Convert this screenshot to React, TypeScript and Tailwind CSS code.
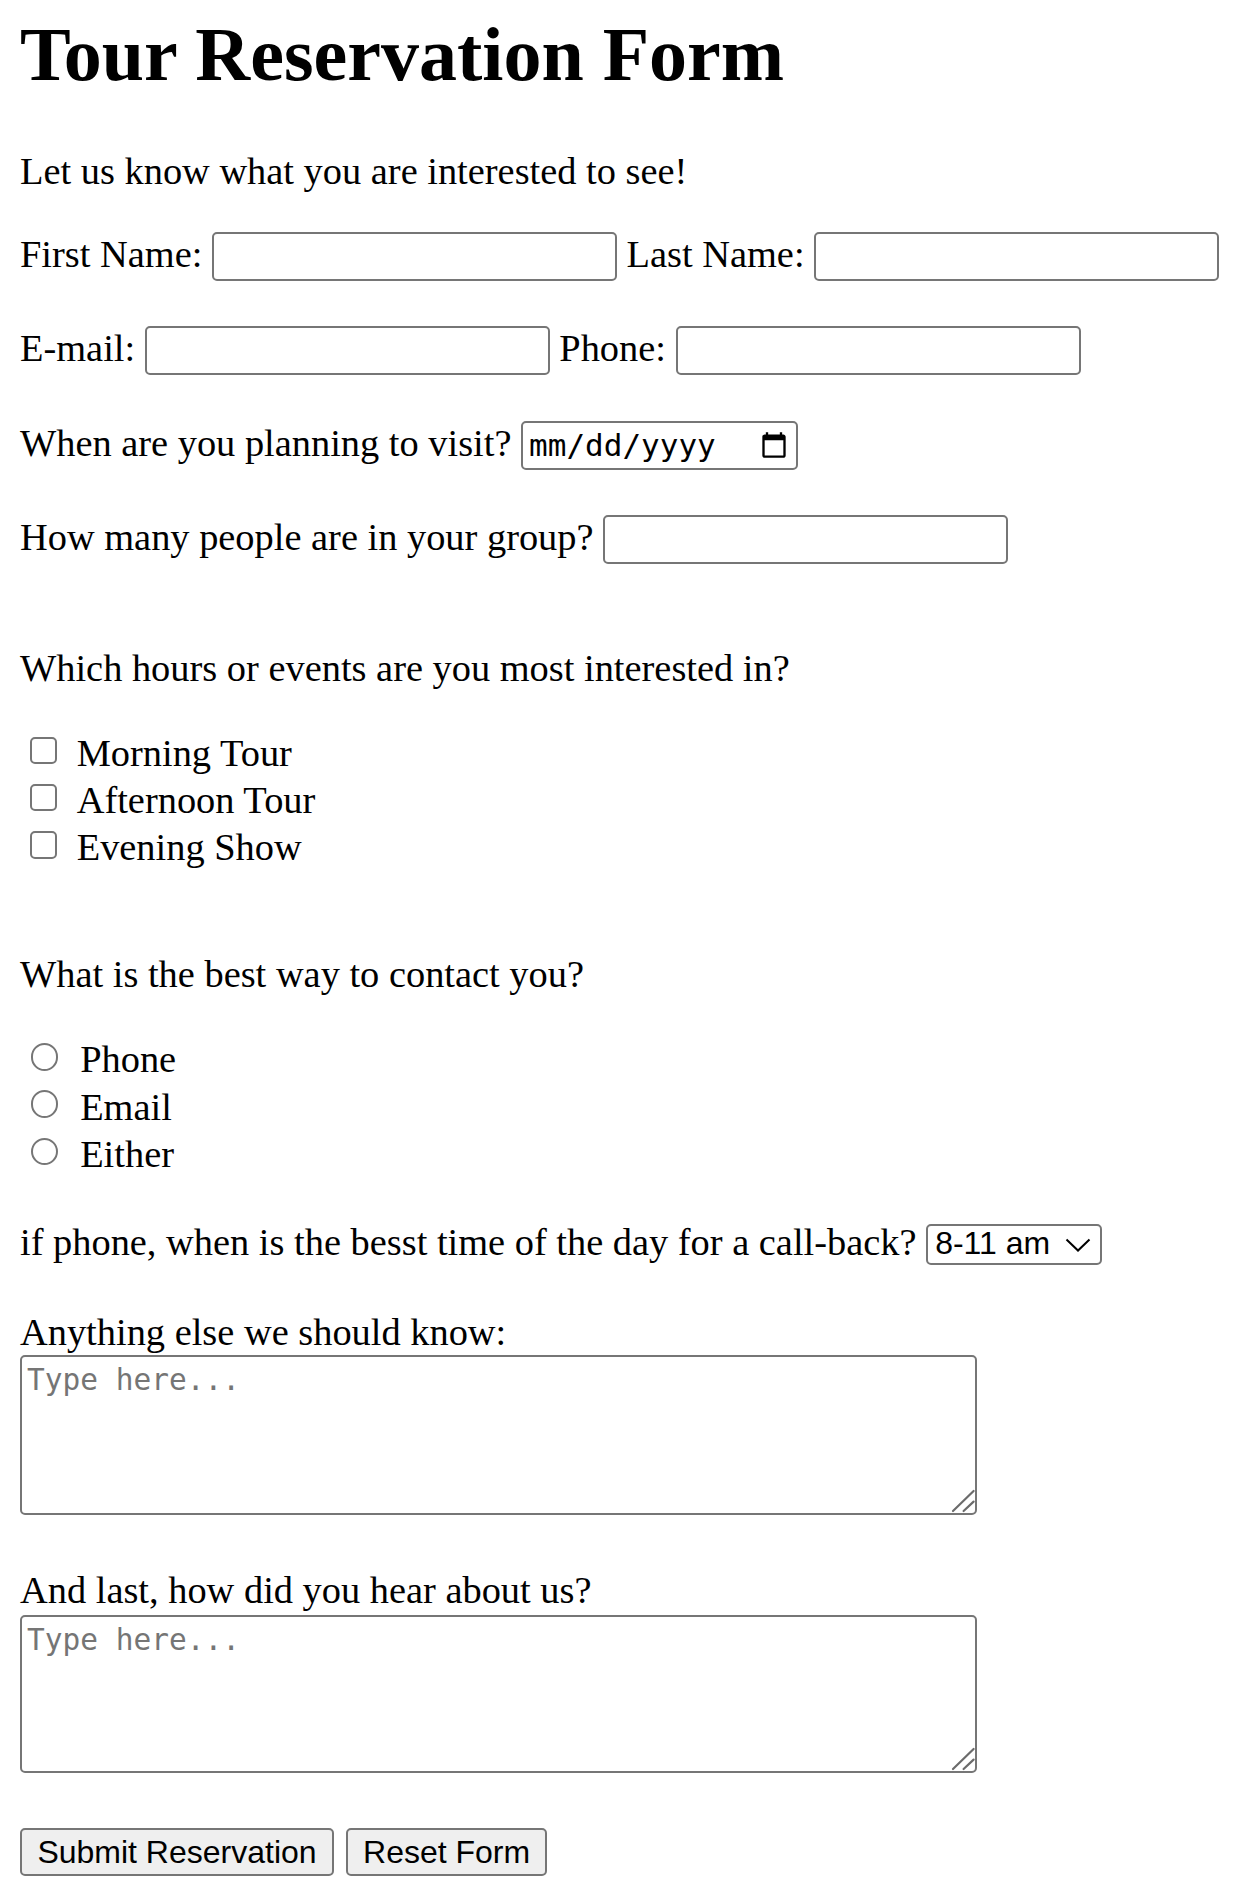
import React from "react";

const inputCls =
  "block w-[405px] h-[49px] border-2 border-[#767676] rounded-[5px] bg-white px-[4px] font-['Liberation_Sans',sans-serif] text-[32px] outline-none";

function CheckRow({ id, label }: { id: string; label: string }) {
  return (
    <div className="flex items-start h-[47.3px]">
      <input
        id={id}
        type="checkbox"
        className="appearance-none block ml-[9.6px] mt-[6px] mr-[19.5px] w-[27.6px] h-[27.6px] border-2 border-[#767676] rounded-[5px] bg-white"
      />
      <label htmlFor={id}>{label}</label>
    </div>
  );
}

function RadioRow({ id, label }: { id: string; label: string }) {
  return (
    <div className="flex items-start h-[47.3px]">
      <input
        id={id}
        type="radio"
        name="contact"
        className="appearance-none block ml-[10.8px] mt-[5.6px] mr-[21.7px] w-[27.7px] h-[27.7px] border-2 border-[#767676] rounded-full bg-white"
      />
      <label htmlFor={id}>{label}</label>
    </div>
  );
}

function Grip() {
  return (
    <svg
      className="absolute right-0 bottom-0 w-[28px] h-[28px] pointer-events-none"
      viewBox="0 0 28 28"
    >
      <line x1="4" y1="24" x2="24.6" y2="4" stroke="#6b6b6b" strokeWidth="2.2" strokeLinecap="round" />
      <line x1="14.6" y1="24" x2="24.6" y2="14.6" stroke="#6b6b6b" strokeWidth="2.2" strokeLinecap="round" />
    </svg>
  );
}

function TextBox({ h }: { h: string }) {
  return (
    <div className={`relative w-[957px] ${h}`}>
      <textarea
        placeholder="Type here..."
        className="block w-full h-full resize-none border-2 border-[#767676] rounded-[5px] bg-white pl-[5px] pt-[6px] font-['DejaVu_Sans_Mono',monospace] text-[29.5px] leading-[35px] placeholder:text-[#757575] outline-none"
      />
      <Grip />
    </div>
  );
}

export default function App() {
  return (
    <div className="min-h-[1897px] bg-white px-[20px] pt-[10px] text-black font-['Liberation_Serif',serif] text-[38.4px] leading-[44px]">
      <h1 className="text-[76px] leading-[88px] font-bold">Tour Reservation Form</h1>
      <p className="mt-[51px]">Let us know what you are interested to see!</p>
      <form>
        <div className="mt-[39px] flex items-start gap-[9.6px]">
          <label htmlFor="fname">First Name:</label>
          <input id="fname" type="text" className={inputCls} />
          <label htmlFor="lname">Last Name:</label>
          <input id="lname" type="text" className={inputCls} />
        </div>
        <div className="mt-[45.3px] flex items-start gap-[9.6px]">
          <label htmlFor="email">E-mail:</label>
          <input id="email" type="text" className={inputCls} />
          <label htmlFor="phone">Phone:</label>
          <input id="phone" type="text" className={inputCls} />
        </div>
        <div className="mt-[45.3px] flex items-start gap-[9.6px]">
          <label>When are you planning to visit?</label>
          <div className="flex items-center w-[277px] h-[49px] border-2 border-[#767676] rounded-[5px] bg-white pl-[6px] pr-[8px]">
            <span className="font-['DejaVu_Sans_Mono',monospace] text-[31px] leading-[36px]">mm/dd/yyyy</span>
            <svg className="ml-auto w-[28px] h-[28px]" viewBox="0 0 24 24">
              <path
                fill="#000"
                d="M20 3h-1V1h-2v2H7V1H5v2H4c-1.1 0-2 .9-2 2v16c0 1.1.9 2 2 2h16c1.1 0 2-.9 2-2V5c0-1.1-.9-2-2-2zm0 18H4V8h16v13z"
              />
            </svg>
          </div>
        </div>
        <div className="mt-[45.3px] flex items-start gap-[9.6px]">
          <label htmlFor="group">How many people are in your group?</label>
          <input id="group" type="text" className={inputCls} />
        </div>

        <p className="mt-[82px]">Which hours or events are you most interested in?</p>
        <div className="mt-[40.7px]">
          <CheckRow id="morning" label="Morning Tour" />
          <CheckRow id="afternoon" label="Afternoon Tour" />
          <CheckRow id="evening" label="Evening Show" />
        </div>

        <p className="mt-[80px]">What is the best way to contact you?</p>
        <div className="mt-[41px]">
          <RadioRow id="r-phone" label="Phone" />
          <RadioRow id="r-email" label="Email" />
          <RadioRow id="r-either" label="Either" />
        </div>

        <div className="mt-[40.4px] flex items-start gap-[9.6px]">
          <label htmlFor="time">if phone, when is the besst time of the day for a call-back?</label>
          <div className="relative mt-[4px]">
            <select
              id="time"
              className="block appearance-none w-[175.4px] h-[41.7px] border-2 border-[#767676] rounded-[5px] bg-white pl-[7px] pb-[7px] font-['Liberation_Sans',sans-serif] text-[32px] leading-[34px] text-black outline-none"
            >
              <option>8-11 am</option>
              <option>11-2 pm</option>
              <option>2-5 pm</option>
            </select>
            <svg
              className="absolute right-[11px] top-[14px] w-[26px] h-[14px] pointer-events-none"
              viewBox="0 0 26 14"
            >
              <polyline points="1.5,1.5 13,12.5 24.5,1.5" fill="none" stroke="#000" strokeWidth="2" />
            </svg>
          </div>
        </div>

        <label htmlFor="else" className="block mt-[44.3px]">Anything else we should know:</label>
        <div className="mt-[1.7px]">
          <TextBox h="h-[160px]" />
        </div>

        <label className="block mt-[52.6px]">And last, how did you hear about us?</label>
        <div className="mt-[2.7px]">
          <TextBox h="h-[158.3px]" />
        </div>

        <div className="mt-[55px] flex items-start gap-[11.8px] font-['Liberation_Sans',sans-serif] text-[32px]">
          <button
            type="submit"
            className="w-[314px] h-[48.4px] border-2 border-[#767676] rounded-[5px] bg-[#efefef] text-black leading-[36px]"
          >
            Submit Reservation
          </button>
          <button
            type="reset"
            className="w-[201.6px] h-[48.4px] border-2 border-[#767676] rounded-[5px] bg-[#efefef] text-black leading-[36px]"
          >
            Reset Form
          </button>
        </div>
      </form>
    </div>
  );
}
